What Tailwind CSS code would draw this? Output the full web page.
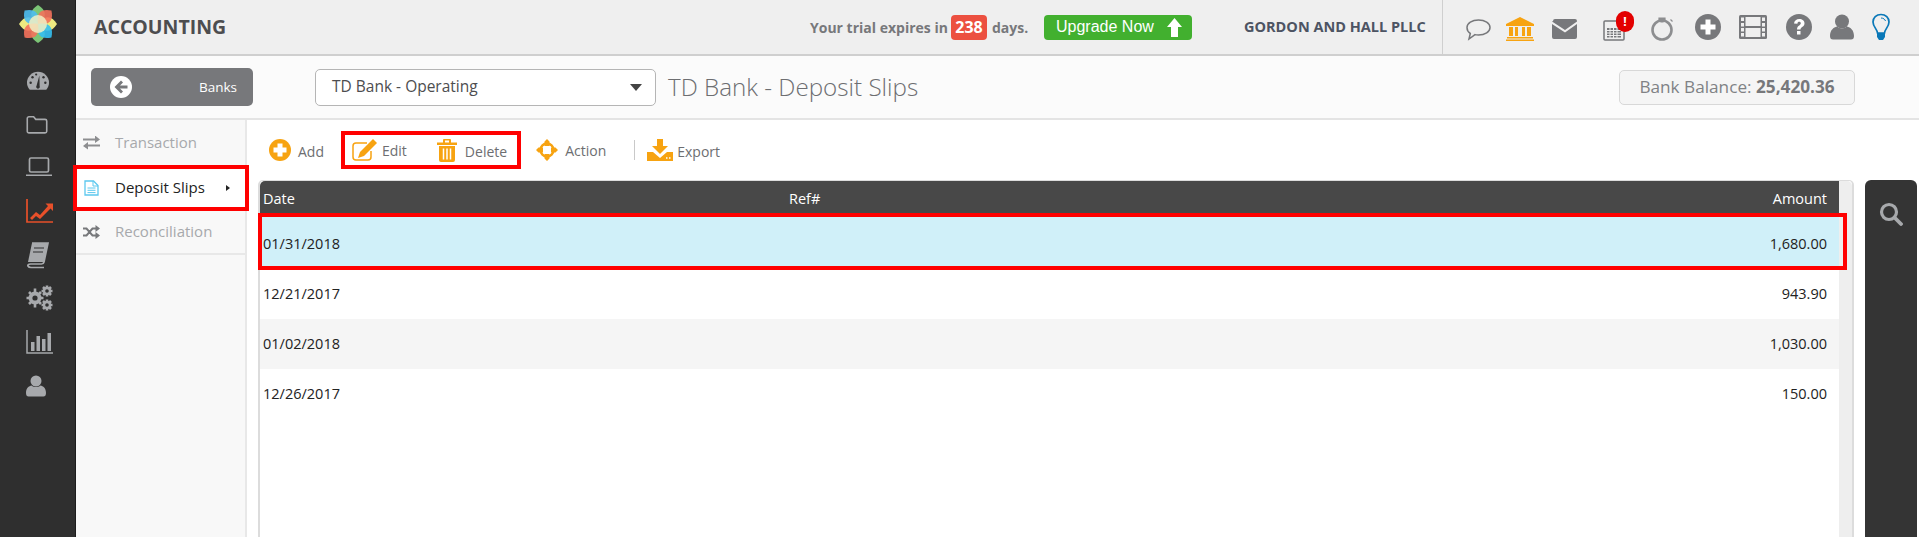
<!DOCTYPE html>
<html>
<head>
<meta charset="utf-8">
<title>Accounting - Deposit Slips</title>
<script src="https://cdn.jsdelivr.net/npm/@tailwindcss/browser@4"></script>
</head>
<body class="bg-white font-['Open_Sans',sans-serif] overflow-hidden">
<div class="relative flex h-[537px] w-[1919px] overflow-hidden">

  <!-- left rail -->
  <aside class="flex h-full w-[76px] shrink-0 flex-col items-center bg-[#2f2f2f] border-r border-[#1c1c1c]">
    <svg class="mt-[4px] h-[40px] w-[40px]" viewBox="-20 -20 40 40">
      <g>
        <path d="M0 0C-10-7-8-14 0-19 8-14 10-7 0 0z" fill="#7cc576"/>
        <path d="M0 0C-10-7-8-14 0-19 8-14 10-7 0 0z" fill="#7cc576" transform="rotate(180)"/>
        <path d="M0 0C-10-7-8-14 0-19 8-14 10-7 0 0z" fill="#eeea80" transform="rotate(90)"/>
        <path d="M0 0C-10-7-8-14 0-19 8-14 10-7 0 0z" fill="#eeea80" transform="rotate(-90)"/>
        <g opacity=".9">
          <path d="M0 0C-10-7-8-14 0-19 8-14 10-7 0 0z" fill="#4dbdf0" transform="rotate(-45)"/>
          <path d="M0 0C-10-7-8-14 0-19 8-14 10-7 0 0z" fill="#f4725c" transform="rotate(45)"/>
          <path d="M0 0C-10-7-8-14 0-19 8-14 10-7 0 0z" fill="#35c0f0" transform="rotate(135)"/>
          <path d="M0 0C-10-7-8-14 0-19 8-14 10-7 0 0z" fill="#f4725c" transform="rotate(-135)"/>
        </g>
      </g>
      <circle r="9" fill="#f1f0c4" opacity=".85"/>
    </svg>
    <div class="mt-[14px] flex w-full flex-col pl-[26px]">
      <div class="flex h-[43.7px] items-center">
        <svg class="h-[22px] w-[24px]" viewBox="0 0 26 24"><path d="M4 22.500C1.800 20.200 1 17.700 1 15a12 12 0 0 1 24 0c0 2.700-.8 5.200-3 7.500z" fill="#a7a9ac"/><path d="M14.500 7l.3 11.500a2 2 0 1 1-3.400-.3z" fill="#2f2f2f"/><g fill="#2f2f2f"><circle cx="5" cy="15" r="1.300"/><circle cx="7" cy="9" r="1.300"/><circle cx="11" cy="6" r="1.200"/><circle cx="19" cy="9" r="1.300"/><circle cx="21" cy="15" r="1.300"/></g></svg>
      </div>
      <div class="flex h-[43.7px] items-center">
        <svg class="h-[22px] w-[22px]" viewBox="0 0 26 26"><path d="M1.500 6.500a2 2 0 0 1 2-2h5.500l2.500 3h11a2 2 0 0 1 2 2v12a2 2 0 0 1-2 2h-19a2 2 0 0 1-2-2z" fill="none" stroke="#a7a9ac" stroke-width="1.900"/></svg>
      </div>
      <div class="flex h-[43.7px] items-center">
        <svg class="h-[26px] w-[26px]" viewBox="0 0 26 26"><rect x="3.500" y="4" width="19" height="14" rx="1.500" fill="none" stroke="#a7a9ac" stroke-width="1.700"/><path d="M0 20.500h26v1.500H0z" fill="#a7a9ac"/></svg>
      </div>
      <div class="flex h-[43.7px] items-center">
        <svg class="h-[30px] w-[28px]" viewBox="0 0 28 30"><path d="M1 3v23h26" fill="none" stroke="#e8502a" stroke-width="1.700"/><path d="M4 22l6-6 4 3 8-9-2.500-2.500H27V15l-2.500-2.500L14 23l-4-3-4 4z" fill="#e8502a"/></svg>
      </div>
      <div class="flex h-[43.7px] items-center">
        <svg class="h-[28px] w-[24px]" viewBox="0 0 24 28"><path d="M6 2h16l-4 19c-.3 1.300-1 2-2.500 2H4.500C2.500 23 1.500 24 2 25s1.500 1.500 3 1.500h13" fill="none" stroke="#a7a9ac" stroke-width="1.700"/><path d="M6 2h16l-4 19H2z" fill="#a7a9ac"/><path d="M8 7h10M7 11h10" stroke="#2f2f2f" stroke-width="1.200"/></svg>
      </div>
      <div class="flex h-[43.7px] items-center">
        <svg class="h-[26px] w-[28px]" viewBox="0 0 28 26"><g fill="#a7a9ac"><circle cx="9" cy="13" r="6.500"/><circle cx="21" cy="6" r="4.200"/><circle cx="21" cy="20" r="4.200"/></g><g stroke="#a7a9ac" stroke-width="2.600"><path d="M9 3.500v19M.500 13h17M3 7l12 12M15 7L3 19"/><path d="M21 .5v11M15.500 6h11M17 2l8 8M25 2l-8 8M21 14.500v11M15.500 20h11M17 16l8 8M25 16l-8 8"/></g><circle cx="9" cy="13" r="2.600" fill="#2f2f2f"/><circle cx="21" cy="6" r="1.800" fill="#2f2f2f"/><circle cx="21" cy="20" r="1.800" fill="#2f2f2f"/></svg>
      </div>
      <div class="flex h-[43.7px] items-center">
        <svg class="h-[24px] w-[28px]" viewBox="0 0 28 24"><path d="M1 0v23h26" fill="none" stroke="#a7a9ac" stroke-width="1.500"/><path d="M5 12h3.500v9H5zM10.500 6H14v15h-3.500zM16 9h3.500v12H16zM21.500 3H25v18h-3.500z" fill="#a7a9ac"/></svg>
      </div>
      <div class="flex h-[43.7px] items-center">
        <svg class="h-[22px] w-[20px]" viewBox="0 0 20 22"><circle cx="10" cy="6" r="5.500" fill="#a7a9ac"/><path d="M0 18c0-5 3-7 5.500-7.500 2.500 2 6.500 2 9 0C17 11 20 13 20 18c0 2.500-1 3.500-2.500 3.500h-15C1 21.500 0 20.500 0 18z" fill="#a7a9ac"/></svg>
      </div>
    </div>
  </aside>

  <div class="flex min-w-0 flex-1 flex-col">
    <!-- top bar -->
    <header class="flex h-[56px] shrink-0 items-center border-b-2 border-[#cfcfcf] bg-[#efefef] pl-[18px]">
      <h1 class="w-[716px] text-[19.5px] font-bold text-[#4d4d4f]">ACCOUNTING</h1>
      <p class="w-[141px] text-[14px] font-bold whitespace-nowrap text-[#77787b]">Your trial expires in</p>
      <span class="flex h-[25px] w-[36px] items-center justify-center rounded-[4px] bg-[#ec5040] text-[16px] font-bold text-white">238</span>
      <span class="ml-[5px] w-[52px] text-[14px] font-bold text-[#77787b]">days.</span>
      <button class="flex h-[25px] w-[148px] items-center justify-between rounded-[4px] bg-[#42b02f] pr-[10px] pl-[12px] font-['Liberation_Sans',sans-serif] text-[16px] whitespace-nowrap text-white">
        Upgrade Now
        <svg class="h-[19px] w-[15px]" viewBox="0 0 15 19"><path d="M7.500 0L15 9h-4v10H4V9H0z" fill="#fff"/></svg>
      </button>
      <p class="ml-[52px] w-[198px] text-[14.5px] font-bold whitespace-nowrap text-[#4d5463]">GORDON AND HALL PLLC</p>
      <div class="flex h-full items-center border-l border-[#cfcfcf] pl-[20px]">
        <svg class="h-[30px] w-[30px]" viewBox="0 0 30 30"><path d="M15.500 8c6.500 0 11.500 3.200 11.500 7.500S22 23 15.500 23c-1.200 0-2.400-.1-3.500-.4L6 27l1.300-5.500C5 20 4 18 4 15.500 4 11.200 9 8 15.500 8z" fill="none" stroke="#77787b" stroke-width="1.500"/></svg>
        <svg class="ml-[12px] h-[30px] w-[30px]" viewBox="0 0 30 30"><path d="M15 5l14 7v2H1v-2zM4 15h4v9H4zM10 15h3v9h-3zM17 15h3v9h-3zM22 15h4v9h-4zM2 25h26v1.500H2zM1 27.500h28V29H1z" fill="#f7a311"/></svg>
        <svg class="ml-[15px] h-[30px] w-[30px]" viewBox="0 0 30 30"><path d="M3 9a2 2 0 0 1 2-2h20a2 2 0 0 1 2 2v.500L15 18 2 9.500zM2 12l13 8.500L27 12v13a2 2 0 0 1-2 2H4a2 2 0 0 1-2-2z" fill="#77787b"/></svg>
        <div class="relative ml-[20px] h-[30px] w-[30px]">
          <svg class="h-[30px] w-[30px]" viewBox="0 0 30 30"><rect x="4" y="9" width="20" height="19" rx="1" fill="none" stroke="#77787b" stroke-width="1.500"/><path d="M7 16h14v9.500H7z" fill="#77787b"/><path d="M7 18.500h14M7 21h14M7 23.500h14M10 16v10M13.500 16v10M17 16v10" stroke="#efefef" stroke-width="1"/></svg>
          <span class="absolute top-[-1px] left-[16px] flex h-[21px] w-[18px] items-center justify-center rounded-full bg-[#e30000] text-[12px] font-bold text-white">!</span>
        </div>
        <svg class="ml-[17px] h-[30px] w-[30px]" viewBox="0 0 30 30"><circle cx="15" cy="18" r="9.500" fill="none" stroke="#8d8e90" stroke-width="2.600"/><path d="M12 6h6v1.500h-6zM14 7h2v3h-2zM23.500 7.500l2 2" stroke="#8d8e90" stroke-width="1.200" fill="#8d8e90"/></svg>
        <svg class="ml-[16px] h-[30px] w-[30px]" viewBox="0 0 30 30"><circle cx="15" cy="15" r="13" fill="#77787b"/><path d="M12.500 7.500h5v5h5v5h-5v5h-5v-5h-5v-5h5z" fill="#fff"/></svg>
        <svg class="ml-[15px] h-[30px] w-[30px]" viewBox="0 0 30 30"><rect x="1" y="3" width="28" height="24" rx="1.500" fill="#77787b"/><path d="M7.500 5h15v9h-15zM7.500 16h15v9h-15z" fill="#efefef"/><path d="M3 5.500h3V9H3zM3 11h3v3.500H3zM3 16h3v3.500H3zM3 21h3v3.500H3zM24 5.500h3V9h-3zM24 11h3v3.500h-3zM24 16h3v3.500h-3zM24 21h3v3.500h-3z" fill="#efefef"/></svg>
        <svg class="ml-[16px] h-[30px] w-[30px]" viewBox="0 0 30 30"><circle cx="15" cy="15" r="13" fill="#77787b"/><path d="M10 11.500c.3-3 2.500-4.500 5.300-4.500 3 0 5.200 1.700 5.200 4.300 0 3.700-4 3.600-4 6.200h-3.500c0-4 3.800-4 3.800-6.200 0-1-.7-1.500-1.600-1.500-1 0-1.700.6-1.800 1.900zM13 19h3.500v3.500H13z" fill="#fff"/></svg>
        <svg class="ml-[13px] h-[30px] w-[30px]" viewBox="0 0 30 30"><circle cx="15" cy="9.500" r="7" fill="#77787b"/><path d="M3 24c0-6 3.500-8.500 7-9.500 3 2.500 7 2.500 10 0 3.500 1 7 3.500 7 9.500 0 2.500-1 3.500-3 3.500H6c-2 0-3-1-3-3.500z" fill="#77787b"/></svg>
        <svg class="ml-[9px] h-[30px] w-[30px]" viewBox="0 0 30 30"><path d="M15 2.500c4.700 0 8 3.300 8 7.500 0 4.700-4.200 7-4.500 11h-7c-.3-4-4.500-6.300-4.500-11 0-4.200 3.300-7.500 8-7.500z" fill="none" stroke="#0a78b8" stroke-width="1.700"/><path d="M11 21h8v4l-2 3h-4l-2-3z" fill="#0a78b8"/><path d="M15 6c2.500 0 4 1.500 4.500 3" fill="none" stroke="#0a78b8" stroke-width="1"/></svg>
      </div>
    </header>

    <!-- bank bar -->
    <div class="flex h-[64px] shrink-0 items-center border-b-2 border-[#e4e4e4] bg-[#fbfbfb] pl-[15px]">
      <a class="flex h-[38px] w-[162px] items-center justify-between rounded-[5px] bg-[#77787b] pr-[16px] pl-[19px] text-[13.5px] text-white">
        <svg class="h-[22px] w-[22px]" viewBox="0 0 22 22"><circle cx="11" cy="11" r="11" fill="#fff"/><path d="M11 4.500l2 2-3 3h7.500v3H10l3 3-2 2L4.500 11z" fill="#77787b"/></svg>
        Banks
      </a>
      <div class="ml-[62px] flex h-[37px] w-[341px] items-center justify-between rounded-[5px] border border-[#b5b5b5] bg-white pr-[13px] pl-[16px] text-[15.5px] text-[#4d4d4f]">
        TD Bank - Operating
        <span class="h-0 w-0 border-x-[6px] border-t-[7px] border-x-transparent border-t-[#444]"></span>
      </div>
      <h2 class="ml-[12px] text-[24.2px] font-light text-[#6d6e71]">TD Bank - Deposit Slips</h2>
      <div class="mr-[64px] ml-auto flex h-[35px] w-[236px] items-center justify-center rounded-[5px] border border-[#d8d8d8] bg-[#f5f5f5] text-[17.2px] text-[#808285]">
        Bank Balance:&nbsp;<b class="font-bold text-[#77787b]">25,420.36</b>
      </div>
    </div>

    <div class="flex min-h-0 flex-1">
      <!-- sub nav -->
      <nav class="w-[171px] shrink-0 border-r-2 border-[#e8e8e8] bg-[#f8f8f8] text-[15px]">
        <a class="flex h-[45px] items-center pl-[7px] text-[#a7a9ac]">
          <svg class="h-[14px] w-[17px]" viewBox="0 0 17 14"><path d="M0 3h12V0l5 4-5 3.500V5H0zM17 9H5V6.500L0 10.500 5 14v-3h12z" fill="#8d8e90" transform="translate(0 -.5)"/></svg>
          <span class="ml-[15px]">Transaction</span>
        </a>
        <a class="flex h-[45px] items-center bg-white pl-[8px] text-[#222]">
          <svg class="h-[16px] w-[15px]" viewBox="0 0 15 16"><path d="M1 1h8.500L14 5.500V15H1z" fill="none" stroke="#5cc8ee" stroke-width="1.300"/><path d="M9 1v5h5M3.500 8h8M3.500 10.300h8M3.500 12.600h8" fill="none" stroke="#5cc8ee"/></svg>
          <span class="ml-[16px]">Deposit Slips</span>
          <span class="ml-[21px] h-0 w-0 border-y-[3.500px] border-l-[4px] border-y-transparent border-l-[#222]"></span>
        </a>
        <a class="flex h-[45px] items-center border-b-2 border-[#e8e8e8] pl-[7px] text-[#a7a9ac]">
          <svg class="h-[14px] w-[17px]" viewBox="0 0 17 14"><path d="M0 3.500h3.500l6 7H13M0 10.500h3.500l6-7H13" fill="none" stroke="#77787b" stroke-width="2"/><path d="M12.500 0L17 3.500 12.500 7zM12.500 7L17 10.500 12.500 14z" fill="#77787b"/></svg>
          <span class="ml-[15px]">Reconciliation</span>
        </a>
      </nav>

      <!-- list -->
      <main class="flex min-w-0 flex-1 flex-col pl-[11px]">
        <div class="flex h-[60px] shrink-0 items-center text-[14px] text-[#6d6e71]">
          <span class="ml-[11px] flex items-center">
            <svg class="h-[22px] w-[22px]" viewBox="0 0 22 22"><circle cx="11" cy="11" r="11" fill="#f7a311"/><path d="M8.500 4.500h5v4h4v5h-4v4h-5v-4h-4v-5h4z" fill="#fff"/></svg>
            <span class="ml-[7px] mt-[3px]">Add</span>
          </span>
          <span class="ml-[28px] flex items-center">
            <svg class="h-[22px] w-[25px]" viewBox="0 0 25 22"><path d="M19 12v6a3 3 0 0 1-3 3H4a3 3 0 0 1-3-3V7a3 3 0 0 1 3-3h11" fill="none" stroke="#f7a311" stroke-width="1.500"/><path d="M21 0l4 4L12 17l-6 2 2-6z" fill="#f7a311"/></svg>
            <span class="ml-[5px]">Edit</span>
          </span>
          <span class="ml-[30px] flex items-center">
            <svg class="h-[23px] w-[20px]" viewBox="0 0 20 23"><path d="M0 3.500h6V1a1 1 0 0 1 1-1h6a1 1 0 0 1 1 1v2.500h6V6H0zM8 1.500V3.500h4v-2zM2 7h16v14a2 2 0 0 1-2 2H4a2 2 0 0 1-2-2z" fill="#f7a311" fill-rule="evenodd"/><path d="M6.500 9.500v11M10 9.500v11M13.500 9.500v11" stroke="#fff" stroke-width="1.500"/></svg>
            <span class="ml-[8px] mt-[2px]">Delete</span>
          </span>
          <span class="ml-[29px] flex items-center">
            <svg class="h-[22px] w-[22px]" viewBox="0 0 22 22"><circle cx="11" cy="11" r="6.500" fill="none" stroke="#f7a311" stroke-width="2.400"/><path d="M11 0l2.500 2.500V7h-5V2.500zM11 22l-2.500-2.500V15h5v4.500zM0 11l2.500-2.500H7v5H2.500zM22 11l-2.500 2.500H15v-5h4.500z" fill="#f7a311"/></svg>
            <span class="ml-[7px]">Action</span>
          </span>
          <span class="ml-[28px] h-[20px] w-[1px] bg-[#c9c9c9]"></span>
          <span class="ml-[12px] flex items-center">
            <svg class="h-[22px] w-[26px]" viewBox="0 0 26 22"><path d="M10 0h6v7h5l-8 8-8-8h5z" fill="#f7a311"/><path d="M0 13h6l7 6 7-6h6v9H0z" fill="#f7a311"/><path d="M19 19h1.500M22 19h1.500" stroke="#fff" stroke-width="1.500"/></svg>
            <span class="ml-[4px] mt-[2px]">Export</span>
          </span>
        </div>

        <div class="flex min-h-0 flex-1">
          <div class="flex w-[1596px] shrink-0 flex-col rounded-t-[5px] border-x-2 border-t border-[#dcdcdc]">
            <div class="flex min-h-0 flex-1">
              <div class="flex min-w-0 flex-1 flex-col text-[14.5px] text-[#222]">
                <div class="grid h-[35px] grid-cols-[526px_1fr_auto] items-center rounded-tl-[5px] bg-[#484848] pr-[12px] pl-[3px] text-white">
                  <span>Date</span><span>Ref#</span><span>Amount</span>
                </div>
                <div class="flex h-[53px] items-center justify-between bg-[#d0f0f9] pt-[3px] pr-[12px] pl-[3px]"><span>01/31/2018</span><span>1,680.00</span></div>
                <div class="flex h-[50px] items-center justify-between pr-[12px] pl-[3px]"><span>12/21/2017</span><span>943.90</span></div>
                <div class="flex h-[50px] items-center justify-between bg-[#f5f5f5] pr-[12px] pl-[3px]"><span>01/02/2018</span><span>1,030.00</span></div>
                <div class="flex h-[50px] items-center justify-between pr-[12px] pl-[3px]"><span>12/26/2017</span><span>150.00</span></div>
              </div>
              <div class="w-[13px] shrink-0 rounded-tr-[5px] bg-[#eeeeee]"></div>
            </div>
          </div>
          <aside class="ml-[11px] flex h-full w-[52px] shrink-0 justify-center rounded-t-[6px] bg-[#343434] pt-[22px]">
            <svg class="h-[24px] w-[24px]" viewBox="0 0 24 24"><circle cx="10" cy="10" r="7.500" fill="none" stroke="#a7a9ac" stroke-width="3.200"/><path d="M15.500 15.500L22 22" stroke="#a7a9ac" stroke-width="3.800" stroke-linecap="round"/></svg>
          </aside>
        </div>
      </main>
    </div>
  </div>

  <!-- red annotation boxes from the screenshot -->
  <div class="absolute top-[165px] left-[73px] h-[46px] w-[176px] border-4 border-[#ff0000]"></div>
  <div class="absolute top-[131px] left-[341px] h-[38px] w-[180px] border-4 border-[#ff0000]"></div>
  <div class="absolute top-[213px] left-[258px] h-[57px] w-[1589px] border-4 border-[#ff0000]"></div>
</div>
</body>
</html>
